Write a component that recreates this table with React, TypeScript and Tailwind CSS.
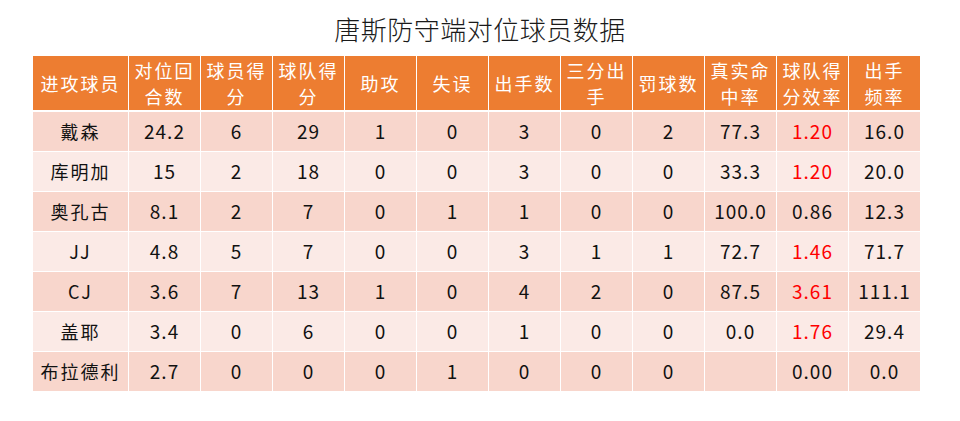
const headers = [
  ["进攻球员"],
  ["对位回", "合数"],
  ["球员得", "分"],
  ["球队得", "分"],
  ["助攻"],
  ["失误"],
  ["出手数"],
  ["三分出", "手"],
  ["罚球数"],
  ["真实命", "中率"],
  ["球队得", "分效率"],
  ["出手", "频率"],
];

type Row = { name: string; cells: string[]; red: boolean };

const rows: Row[] = [
  { name: "戴森", cells: ["24.2", "6", "29", "1", "0", "3", "0", "2", "77.3", "1.20", "16.0"], red: true },
  { name: "库明加", cells: ["15", "2", "18", "0", "0", "3", "0", "0", "33.3", "1.20", "20.0"], red: true },
  { name: "奥孔古", cells: ["8.1", "2", "7", "0", "1", "1", "0", "0", "100.0", "0.86", "12.3"], red: false },
  { name: "JJ", cells: ["4.8", "5", "7", "0", "0", "3", "1", "1", "72.7", "1.46", "71.7"], red: true },
  { name: "CJ", cells: ["3.6", "7", "13", "1", "0", "4", "2", "0", "87.5", "3.61", "111.1"], red: true },
  { name: "盖耶", cells: ["3.4", "0", "6", "0", "0", "1", "0", "0", "0.0", "1.76", "29.4"], red: true },
  { name: "布拉德利", cells: ["2.7", "0", "0", "0", "1", "0", "0", "0", "", "0.00", "0.0"], red: false },
];

const cjk = { fontFamily: '"Noto Sans CJK SC", sans-serif' };

export default function App() {
  return (
    <div className="h-[421px] w-[960px] bg-white" style={cjk}>
      <h1 className="pt-[12px] text-center text-[26px] font-light leading-[34px] tracking-[0.5px] text-[#1a1a1a]">唐斯防守端对位球员数据</h1>
      <div className="ml-[33px] mt-[10px] w-[887px]">
        <div className="grid grid-cols-[95px_repeat(11,71px)] gap-x-px">
          {headers.map((h, i) => (
            <div
              key={i}
              className="flex h-[54px] flex-col items-center justify-center bg-[#ED7D31] text-[18px] leading-[26px] tracking-[2px] text-white"
            >
              {h.map((line) => (
                <span key={line}>{line}</span>
              ))}
            </div>
          ))}
        </div>
        <div className="mt-[2px] grid grid-cols-[95px_repeat(11,71px)] gap-px">
          {rows.map((r, ri) => {
            const bg = ri % 2 === 0 ? "bg-[#F8D6CC]" : "bg-[#FBEAE6]";
            return [
              <div key={r.name} className={`flex h-[39px] items-center justify-center text-[18px] tracking-[2px] text-[#111] ${bg}`}>
                {r.name}
              </div>,
              ...r.cells.map((c, ci) => (
                <div
                  key={r.name + ci}
                  className={`flex h-[39px] items-center justify-center text-[19px] tracking-[1px] ${bg} ${
                    ci === 9 && r.red ? "text-[#FF0000]" : "text-[#111]"
                  }`}
                >
                  {c}
                </div>
              )),
            ];
          })}
        </div>
      </div>
    </div>
  );
}
